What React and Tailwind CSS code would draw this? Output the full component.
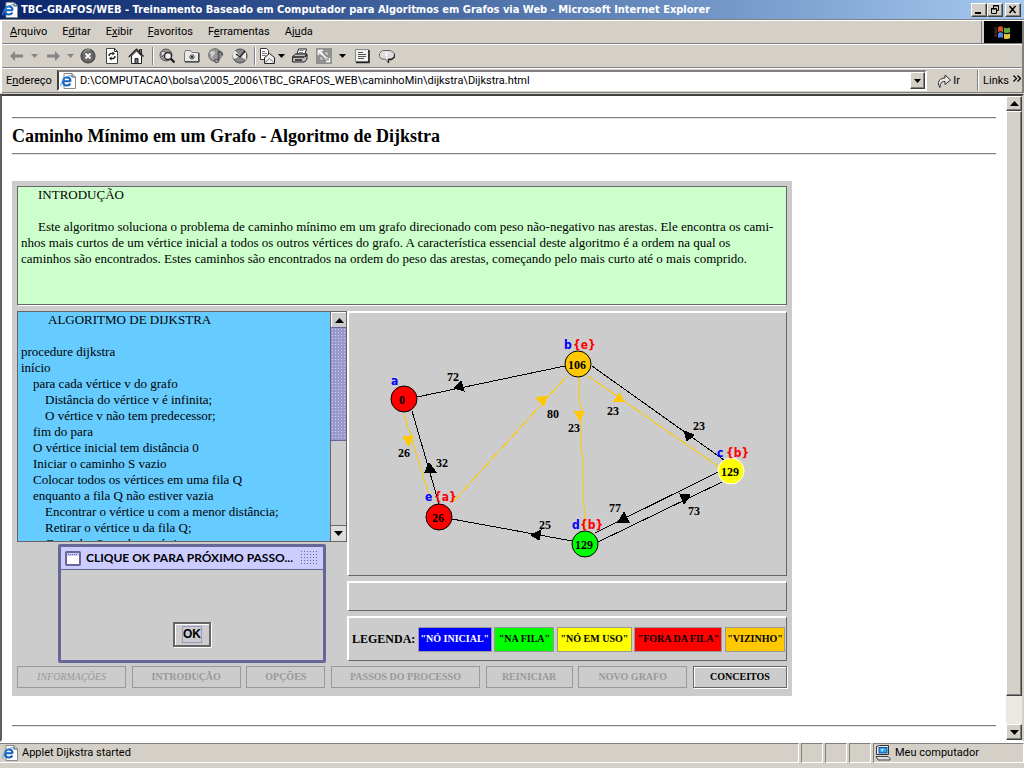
import React from "react";

const raised =
  "border border-t-white border-l-white border-r-[#404040] border-b-[#404040] bg-[#d4d0c8] shadow-[inset_-1px_-1px_0_#808080]";
const sunken = "border border-t-[#808080] border-l-[#808080] border-r-white border-b-white";

const menus = [
  ["", "A", "rquivo"],
  ["E", "d", "itar"],
  ["E", "x", "ibir"],
  ["", "F", "avoritos"],
  ["F", "e", "rramentas"],
  ["Aj", "u", "da"],
];

const algorithm = [
  ["pl-[27px]", "ALGORITMO DE DIJKSTRA"],
  ["", ""],
  ["", "procedure dijkstra"],
  ["", "início"],
  ["pl-3", "para cada vértice v do grafo"],
  ["pl-6", "Distância do vértice v é infinita;"],
  ["pl-6", "O vértice v não tem predecessor;"],
  ["pl-3", "fim do para"],
  ["pl-3", "O vértice inicial tem distância 0"],
  ["pl-3", "Iniciar o caminho S vazio"],
  ["pl-3", "Colocar todos os vértices em uma fila Q"],
  ["pl-3", "enquanto a fila Q não estiver vazia"],
  ["pl-6", "Encontrar o vértice u com a menor distância;"],
  ["pl-6", "Retirar o vértice u da fila Q;"],
  ["pl-6", "Caminho S recebe o vértice u;"],
];

const legend = [
  ['"NÓ INICIAL"', "w-[74px] bg-[#0000ff] text-white"],
  ['"NA FILA"', "w-[60px] bg-[#00ff00] text-black"],
  ['"NÓ EM USO"', "w-[75px] bg-[#ffff00] text-black"],
  ['"FORA DA FILA"', "w-[88px] bg-[#ff0000] text-black"],
  ['"VIZINHO"', "w-[60px] bg-[#ffc800] text-black"],
];

const actions = [
  ["INFORMAÇÕES", "w-[109px] italic font-normal"],
  ["INTRODUÇÃO", "w-[109px] font-bold"],
  ["OPÇÕES", "w-[79px] font-bold"],
  ["PASSOS DO PROCESSO", "w-[149px] font-bold"],
  ["REINICIAR", "w-[87px] font-bold"],
  ["NOVO GRAFO", "w-[109px] font-bold"],
];

const GOLD = "#ffc800";

const edges = [
  { line: [565, 366, 417, 397], head: "454,388 461,381 464,391", color: "#000", weight: 72, at: [447, 381] },
  { line: [404, 414, 430, 498], head: "403,437 413,436 409,446", color: GOLD, weight: 26, at: [398, 457] },
  { line: [439, 504, 412, 411], head: "429,463 425,472 436,472", color: "#000", weight: 32, at: [436, 467] },
  { line: [452, 503, 567, 376], head: "536,398 547,396 544,406", color: GOLD, weight: 80, at: [547, 418] },
  { line: [579, 377, 585, 531], head: "574,411 584,411 580,421", color: GOLD, weight: 23, at: [568, 432] },
  { line: [572, 541, 452, 519], head: "531,535 541,530 539,540", color: "#000", weight: 25, at: [539, 529] },
  { line: [588, 376, 719, 467], head: "614,401 620,393 623,401", color: GOLD, weight: 23, at: [607, 415] },
  { line: [724, 460, 592, 366], head: "684,431 694,435 687,441", color: "#000", weight: 23, at: [693, 430] },
  { line: [718, 472, 595, 533], head: "618,522 624,512 629,522", color: "#000", weight: 77, at: [609, 512] },
  { line: [598, 542, 722, 482], head: "680,494 690,495 684,504", color: "#000", weight: 73, at: [688, 515] },
];

const nodes = [
  { name: "a", cx: 404, cy: 399, fill: "#ff0000", value: 0, vx: 399, name_at: [391, 385] },
  { name: "b", cx: 578, cy: 364, fill: GOLD, value: 106, vx: 568, name_at: [564, 349], prev: "{e}", px: 573 },
  { name: "c", cx: 731, cy: 471, fill: "#ffff00", stroke: "#fff", value: 129, vx: 721, name_at: [717, 457], prev: "{b}", px: 726 },
  { name: "d", cx: 585, cy: 544, fill: "#00ff00", value: 129, vx: 575, name_at: [572, 529], prev: "{b}", px: 580 },
  { name: "e", cx: 439, cy: 517, fill: "#ff0000", value: 26, vx: 432, name_at: [425, 501], prev: "{a}", px: 434 },
];

const IeIcon = () => (
  <svg className="size-4 shrink-0" viewBox="0 0 16 16">
    <path d="M4 .5h8l3.500 3.500v11.500H4z" fill="#fff" stroke="#8a8a8a" />
    <path d="M12 .5V4h3.500" fill="#ddd" stroke="#555" />
    <path d="M10.500 8.200H3.200M10.600 8.500C10.600 5.800 9 4.400 6.900 4.400S3 6 3 8.500s1.600 4 3.900 4c1.700 0 2.900-.8 3.500-2" fill="none" stroke="#1560bd" strokeWidth="2" />
    <path d="M1 13.500C-.5 11 4 5 8 3.300c3-1.200 4-.6 3.600 1" fill="none" stroke="#4aa0e8" />
  </svg>
);

const Caret = ({ className = "text-black" }) => (
  <svg className={`w-[7px] h-1 shrink-0 ${className}`} viewBox="0 0 7 4">
    <path d="M0 0h7L3.500 4z" fill="currentColor" />
  </svg>
);

const Arrow = ({ up }) => (
  <svg className="w-[9px] h-[5px]" viewBox="0 0 9 5">
    <path d={up ? "M0 5h9L4.500 0z" : "M0 0h9L4.500 5z"} fill="#000" />
  </svg>
);

const ToolButton = ({ label, disabled, children, className = "w-6" }) => (
  <button type="button" aria-label={label} disabled={disabled} className={`flex h-full items-center justify-center gap-[3px] ${className}`}>
    {children}
  </button>
);

const Svg = ({ children }) => (
  <svg className="size-4 shrink-0" viewBox="0 0 16 16" fill="none" stroke="#222">
    {children}
  </svg>
);

const Divider = () => <span className="h-[18px] w-[2px] border-l border-l-[#808080] bg-white" />;

const TitleBar = () => (
  <header className="flex h-[19px] items-center bg-linear-to-r from-[#0a246a] to-[#a6caf0] pl-[2px] pr-[3px]">
    <IeIcon />
    <h1 className="flex-1 truncate pl-[3px] font-['DejaVu_Sans_Condensed',sans-serif] text-[11px] leading-[14px] font-bold text-white">
      TBC-GRAFOS/WEB - Treinamento Baseado em Computador para Algoritmos em Grafos via Web - Microsoft Internet Explorer
    </h1>
    <button type="button" aria-label="Minimizar" className={`h-[14px] w-4 ${raised}`}>
      <svg viewBox="0 0 14 12"><path d="M3 8h6v2H3z" /></svg>
    </button>
    <button type="button" aria-label="Restaurar" className={`h-[14px] w-4 ${raised}`}>
      <svg viewBox="0 0 14 12" fill="none" stroke="#000">
        <path d="M5.500 4V1.500h5v5H9M5 2h6M3.500 4.500h5v5h-5zM3 5h6" />
      </svg>
    </button>
    <button type="button" aria-label="Fechar" className={`ml-[2px] h-[14px] w-4 ${raised}`}>
      <svg viewBox="0 0 14 12"><path d="M3.500 2l6 7M9.500 2l-6 7" stroke="#000" strokeWidth="1.600" /></svg>
    </button>
  </header>
);

const MenuBar = () => (
  <div className="flex h-[23px] items-stretch border-b border-b-[#808080]">
    <nav className="flex flex-1 items-center gap-[15px] border-r border-r-[#808080] pl-2">
      {menus.map(([before, key, after]) => (
        <button type="button" key={before + key + after}>
          {before}
          <u>{key}</u>
          {after}
        </button>
      ))}
    </nav>
    <div className="ml-[2px] flex w-[38px] items-center justify-center bg-black">
      <svg className="h-4 w-[18px]" viewBox="0 0 18 16">
        <path d="M4 3c2-1 3-1 5 0v5C7 7 6 7 4 8z" fill="#d9542b" />
        <path d="M10 3.400c2 1 4 1 6-.2v5c-2 1-4 1-6 .2z" fill="#5fae3a" />
        <path d="M4 9c2-1 3-1 5 0v5c-2-1-3-1-5 0z" fill="#4f84d8" />
        <path d="M10 9.400c2 1 4 1 6-.2v5c-2 1-4 1-6 .2z" fill="#e5c13a" />
        <path d="M0 4h3M1 6h2M0 8h3M1 10h2M0 12h3" stroke="#7a3a4a" />
      </svg>
    </div>
  </div>
);

const ToolBar = () => (
  <div className="flex h-6 items-center border-t border-t-white border-b border-b-[#808080] pl-[2px]">
    <ToolButton label="Voltar" disabled>
      <svg className="h-[10px] w-[13px]" viewBox="0 0 13 10"><path d="M0 5l5-5v3.500h8v3H5V10z" fill="#868686" /></svg>
    </ToolButton>
    <Caret className="mx-[3px] text-[#868686]" />
    <ToolButton label="Avançar" disabled>
      <svg className="h-[10px] w-[13px]" viewBox="0 0 13 10"><path d="M13 5L8 0v3.500H0v3h8V10z" fill="#868686" /></svg>
    </ToolButton>
    <Caret className="mx-[2px] text-[#868686]" />
    <ToolButton label="Parar">
      <Svg>
        <circle cx="8" cy="8" r="7" fill="#666" stroke="#333" />
        <path d="M3.500 5A6 6 0 0 1 10 2" stroke="#bbb" />
        <path d="M5.500 5.500l5 5M10.500 5.500l-5 5" stroke="#fff" strokeWidth="2" />
      </Svg>
    </ToolButton>
    <ToolButton label="Atualizar">
      <Svg>
        <path d="M2.500 .5h8l3 3v12h-11z" fill="#fff" stroke="#444" />
        <path d="M10.500 .5v3h3" />
        <path d="M5 8c0-2 1.500-3 4-2.500M11 8c0 2-1.500 3-4 2.500" strokeWidth="1.400" />
        <path d="M8.500 3.500l2.500 2-2.500 2zM7.500 8.500L5 10.500l2.500 2z" fill="#222" stroke="none" />
      </Svg>
    </ToolButton>
    <ToolButton label="Página inicial">
      <Svg>
        <path d="M11.500 1.500h2v5h-2z" fill="#888" />
        <path d="M3.500 8v7.500h10V8L8.500 3z" fill="#fff" />
        <path d="M.8 9L8.500 1.300 15.500 8.500" strokeWidth="1.400" />
        <path d="M7 10.500h3v5H7z" fill="#777" />
      </Svg>
    </ToolButton>
    <span className="w-1" />
    <Divider />
    <ToolButton label="Pesquisar" className="w-[26px]">
      <Svg>
        <circle cx="7" cy="7" r="6" fill="#999" stroke="#555" />
        <path d="M3 4c2-2 4 0 3 2s-3 1-3 3" stroke="#555" fill="#ddd" />
        <circle cx="9" cy="8" r="3.500" fill="#eee" stroke="#222" strokeWidth="1.300" />
        <path d="M11.500 10.500l4 4" strokeWidth="2.400" />
      </Svg>
    </ToolButton>
    <ToolButton label="Favoritos">
      <Svg>
        <path d="M.5 4.500v9h14v-9H8l-1.500-2h-5z" fill="#e8e8e8" stroke="#777" />
        <path d="M15 5v9H1" />
        <path d="M8 6v6M5 9h6M6 7l4 4M10 7l-4 4" strokeWidth=".8" />
      </Svg>
    </ToolButton>
    <ToolButton label="Mídia">
      <Svg>
        <circle cx="7" cy="7" r="6.300" fill="#999" stroke="#666" />
        <path d="M2 5c3-3 5-1 4 1s-3 1-2 4" stroke="#ddd" fill="#ccc" />
        <path d="M10.500 13V3.500c2 0 4 1 4 4" stroke="#555" strokeWidth="1.600" />
        <ellipse cx="8.500" cy="13" rx="2" ry="1.600" fill="#aaa" stroke="#444" />
      </Svg>
    </ToolButton>
    <ToolButton label="Histórico">
      <Svg>
        <circle cx="8" cy="8" r="7" fill="#888" stroke="#444" />
        <path d="M8 8L3 2.500A7 7 0 0 0 2 11zM8 8l6-4v8z" fill="#eee" stroke="none" />
        <path d="M8 9l5-6M8 9L4 6" strokeWidth="1.400" />
      </Svg>
    </ToolButton>
    <span className="w-[2px]" />
    <Divider />
    <ToolButton label="Correio" className="w-8">
      <Svg>
        <path d="M1.500 .5h6l2 2v9h-8z" fill="#fff" stroke="#333" />
        <path d="M3 3.500h3M3 5.500h5M3 7.500h4" stroke="#777" />
        <path d="M5.500 9.500l5-4 5 4v6h-10z" fill="#eee" />
        <path d="M5.500 15l5-4.500 5 4.500" stroke="#777" />
      </Svg>
      <Caret />
    </ToolButton>
    <ToolButton label="Imprimir">
      <Svg>
        <path d="M5 6l1.500-5h8L13 6z" fill="#fff" />
        <path d="M7.500 2.500h4M7 4.500h4" stroke="#888" />
        <path d="M.5 8.500l3-2.500H15v5l-2.500 3H.5z" fill="#bbb" />
        <path d="M1 9h11M12.500 9L15 6.500M3 12h7" strokeWidth="1.400" />
      </Svg>
    </ToolButton>
    <ToolButton label="Tela inteira" disabled>
      <Svg>
        <rect width="16" height="16" fill="#909090" stroke="none" />
        <path d="M5 7V5h2M9 5h2v2M11 9v2H9M7 11H5V9" stroke="#ddd" strokeWidth="1.200" />
        <path d="M2.500 7V2.500H7M3 3l7 7" stroke="#fff" strokeWidth="1.600" />
        <path d="M13.500 10v3.500H10" stroke="#fff" strokeWidth="1.400" />
      </Svg>
    </ToolButton>
    <Caret className="mx-[3px] text-black" />
    <ToolButton label="Editar" className="w-[26px]">
      <Svg>
        <path d="M1.500 1.500h13v12h-13z" fill="#f0f0f0" stroke="#888" />
        <path d="M15 2v12.500H2" strokeWidth="1.600" />
        <path d="M4 4.500h5M4 6.500h8M4 8.500h8M4 10.500h6" stroke="#555" />
      </Svg>
    </ToolButton>
    <ToolButton label="Discutir">
      <Svg>
        <path d="M3.500 2.500h8l4 3v3l-3 2.500H9.500v4l-3-4h-4l-2-2.500v-3z" fill="#ddd" stroke="#666" />
        <path d="M15.500 6v3l-3 2.500H9.500V15" strokeWidth="1.300" />
        <path d="M7.500 4v4M7.500 9v1.500" stroke="#fff" strokeWidth="1.600" />
      </Svg>
    </ToolButton>
  </div>
);

const AddressBar = () => (
  <form className="flex h-[25px] items-center border-t border-t-white border-b border-b-[#808080] pl-1" onSubmit={(e) => e.preventDefault()}>
    <label htmlFor="address" className="w-[51px]">
      E<u>n</u>dereço
    </label>
    <div className="flex h-[21px] flex-1 items-center border-2 border-t-[#808080] border-l-[#404040] border-r-white border-b-white bg-white pl-px">
      <IeIcon />
      <input
        id="address"
        className="min-w-0 flex-1 pl-1 text-black outline-none"
        defaultValue="D:\COMPUTACAO\bolsa\2005_2006\TBC_GRAFOS_WEB\caminhoMin\dijkstra\Dijkstra.html"
      />
      <button type="button" aria-label="Abrir lista" className={`flex h-[17px] w-[15px] items-center justify-center ${raised}`}>
        <Caret />
      </button>
    </div>
    <button type="submit" className="ml-[10px] flex items-center gap-[2px]">
      <svg className="h-[14px] w-[14px]" viewBox="0 0 14 14">
        <path d="M3 13.500C-.5 9 2 4 8 4V1l5.500 5L8 10.500V7.500C4.500 7 3 9.500 3 13.500z" fill="#e8e8e8" stroke="#333" />
      </svg>
      Ir
    </button>
    <span className="ml-[17px] h-[21px] w-[2px] border-l border-l-[#808080] bg-white" />
    <button type="button" className="ml-1 flex items-start gap-1 pr-px">
      Links
      <svg className="mt-px h-[7px] w-2" viewBox="0 0 8 7" fill="none" stroke="#000" strokeWidth="1.300">
        <path d="M.5 .5l3 3-3 3M4.500 .5l3 3-3 3" />
      </svg>
    </button>
  </form>
);

const Rule = () => <hr className="h-[2px] border-0 border-t border-t-[#808080] bg-[#e4e4e4]" />;

const Graph = () => (
  <svg className="block w-full" viewBox="349 313 437 262" role="img" aria-label="Grafo">
    {edges.map((e) => (
      <g key={e.head}>
        <line x1={e.line[0]} y1={e.line[1]} x2={e.line[2]} y2={e.line[3]} stroke={e.color} shapeRendering="crispEdges" />
        <polygon points={e.head} fill={e.color} stroke={e.color} shapeRendering="crispEdges" />
        <text x={e.at[0]} y={e.at[1]} className="font-['Liberation_Serif',serif] text-[12px] font-bold">
          {e.weight}
        </text>
      </g>
    ))}
    {nodes.map((n) => (
      <g key={n.name}>
        <circle cx={n.cx} cy={n.cy} r="13" fill={n.fill} stroke={n.stroke || "#000"} />
        <text x={n.vx} y={n.cy + 5} className="font-['Liberation_Serif',serif] text-[12px] font-bold">
          {n.value}
        </text>
        <text x={n.name_at[0]} y={n.name_at[1]} fill="#0000ff" className="font-['DejaVu_Sans_Condensed',sans-serif] text-[12px] font-bold">
          {n.name}
        </text>
        {n.prev && (
          <text x={n.px} y={n.name_at[1]} fill="#ff0000" className="font-['DejaVu_Sans_Condensed',sans-serif] text-[12px] font-bold">
            {n.prev}
          </text>
        )}
      </g>
    ))}
  </svg>
);

const panel = "border border-t-2 border-l-2 border-t-white border-l-white border-r-[#666666] border-b-[#666666]";

const StepDialog = () => (
  <section role="dialog" aria-label="Próximo passo" className="-mb-0.5 mt-0.5 ml-[41px] flex h-[119px] w-[268px] flex-col rounded-[2px] border-[3px] border-[#666699] bg-[#cccccc]">
    <div className="flex h-[23px] items-center gap-[5px] border-b border-b-[#666699] bg-[#ccccff] pr-[5px] pl-1">
      <svg className="h-[15px] w-4 shrink-0" viewBox="0 0 16 15">
        <rect x="1" y="1" width="14" height="13" rx="1" fill="#fff" stroke="#666699" strokeWidth="2" />
        <path d="M2 2h12v3H2z" fill="#ccccff" />
        <path d="M3 3.500h10" stroke="#666699" strokeDasharray="1 1" />
      </svg>
      <h3 className="flex-1 whitespace-nowrap font-[Lato,sans-serif] text-[12px] leading-4 font-bold">CLIQUE OK PARA PRÓXIMO PASSO...</h3>
      <span className="h-4 w-[18px] bg-[radial-gradient(#666699_30%,transparent_31%)] bg-size-[3px_3px]" />
    </div>
    <div className="flex flex-1 items-end justify-center pb-[13px]">
      <button type="button" className="flex h-[25px] w-[38px] items-center justify-center border-2 border-[#666666] bg-[#cccccc] shadow-[1px_1px_0_#fff,inset_1px_1px_0_#fff]">
        <span className="border border-[#9999cc] font-['Liberation_Sans',sans-serif] text-[12px] leading-[15px] font-bold">OK</span>
      </button>
    </div>
  </section>
);

const AlgorithmPane = () => (
  <div className="flex h-[231px] border border-[#666666] bg-[#66ccff]">
    <div className="flex-1 overflow-hidden pl-[3px] leading-4">
      {algorithm.map(([indent, text], i) => (
        <p key={i} className={`h-4 whitespace-nowrap ${indent}`}>
          {text}
        </p>
      ))}
    </div>
    <div className="flex w-4 flex-col border-l border-l-[#666666] bg-[#cccccc]">
      <button type="button" aria-label="Subir" className="flex h-[15px] items-center justify-center border-t border-l border-white">
        <Arrow up />
      </button>
      <div className="h-[114px] border border-r-0 border-l-0 border-[#666699] bg-[#9999cc] bg-[radial-gradient(#ccccff_30%,transparent_31%)] bg-size-[3px_3px]" />
      <div className="flex-1" />
      <button type="button" aria-label="Descer" className="flex h-4 items-center justify-center border-t border-t-[#666666] bg-[#dddddd]">
        <Arrow />
      </button>
    </div>
  </div>
);

const Applet = () => (
  <section className="mt-[26px] flex w-[780px] flex-col gap-[5px] bg-[#cccccc] px-[5px] pt-[5px] pb-2 font-['Liberation_Serif',serif] text-[13px] text-black">
    <div className="h-[120px] border border-[#666666] border-b-white bg-[#ccffcc] pl-[3px] leading-4 whitespace-nowrap shadow-[inset_0_-1px_0_#666666]">
      <p className="pl-[17px]">INTRODUÇÃO</p>
      <p className="mt-4 pl-[17px]">
        Este algoritmo soluciona o problema de caminho mínimo em um grafo direcionado com peso não-negativo nas arestas. Ele encontra os cami-
      </p>
      <p>nhos mais curtos de um vértice inicial a todos os outros vértices do grafo. A característica essencial deste algoritmo é a ordem na qual os</p>
      <p>caminhos são encontrados. Estes caminhos são encontrados na ordem do peso das arestas, começando pelo mais curto até o mais comprido.</p>
    </div>
    <div className="grid grid-cols-[330px_1fr]">
      <div>
        <AlgorithmPane />
        <StepDialog />
      </div>
      <div className="flex flex-col gap-[5px]">
        <div className={panel}>
          <Graph />
        </div>
        <div className={`h-[30px] ${panel}`} />
        <div className={`flex h-[45px] items-center justify-between pl-[3px] pr-px ${panel}`}>
          <span className="text-[12px] font-bold">LEGENDA:</span>
          {legend.map(([text, style]) => (
            <span key={text} className={`flex h-[25px] items-center justify-center border border-[#999999] text-[10px] font-bold whitespace-nowrap ${style}`}>
              {text}
            </span>
          ))}
        </div>
      </div>
    </div>
    <div className="flex justify-between text-[10px]">
      {actions.map(([text, style]) => (
        <button key={text} type="button" disabled className={`h-[22px] border border-[#999999] whitespace-nowrap text-[#999999] ${style}`}>
          {text}
        </button>
      ))}
      <button type="button" className="h-[22px] w-[94px] border border-[#666666] font-bold shadow-[1px_1px_0_#fff,inset_1px_1px_0_#fff]">
        CONCEITOS
      </button>
    </div>
  </section>
);

const PageScrollbar = () => (
  <div className="flex w-4 shrink-0 flex-col bg-[#eae8e3]">
    <button type="button" aria-label="Rolar para cima" className={`flex h-[15px] items-center justify-center ${raised}`}>
      <Arrow up />
    </button>
    <div className={`mb-[28px] flex-1 ${raised}`} />
    <button type="button" aria-label="Rolar para baixo" className={`flex h-4 items-center justify-center ${raised}`}>
      <Arrow />
    </button>
  </div>
);

const StatusBar = () => (
  <footer className="flex h-[26px] items-stretch gap-[2px] border-t border-t-white pb-[5px]">
    <div className={`flex flex-1 items-center gap-1 pl-[2px] ${sunken} border-l-0`}>
      <IeIcon />
      Applet Dijkstra started
    </div>
    <div className={`w-[22px] ${sunken}`} />
    <div className={`w-[22px] ${sunken}`} />
    <div className={`w-[22px] ${sunken}`} />
    <div className={`flex w-[151px] items-center gap-1 pl-px ${sunken}`}>
      <svg className="size-4" viewBox="0 0 16 16">
        <path d="M1.500 1.500l3-1h9v9h-12z" fill="#eee" stroke="#333" />
        <rect x="4" y="2.500" width="8" height="5.500" fill="#2aa5ee" stroke="#1a4fa0" />
        <path d="M6 4h3l-2 3z" fill="#bfe8ff" />
        <path d="M1 11.500h12l2 2v1.500H3z" fill="#ddd" stroke="#444" />
      </svg>
      Meu computador
    </div>
  </footer>
);

export default function App() {
  return (
    <div className="flex min-h-screen flex-col overflow-x-hidden bg-[#d4d0c8] font-[Roboto,sans-serif] text-[11px] leading-[14px] text-black">
      <TitleBar />
      <div className="border-t border-t-[#808080] bg-white pt-px">
        <div className="ml-[2px] border-r-2 border-r-[#808080] bg-[#d4d0c8]">
          <MenuBar />
          <ToolBar />
          <AddressBar />
        </div>
      </div>
      <main className="mt-px flex flex-1 border-2 border-t-[#404040] border-l-[#606060] border-r-[#d4d0c8] border-b-white bg-white">
        <div className="min-w-0 flex-1 px-[10px] pt-[21px]">
          <Rule />
          <h2 className="py-[5px] font-['Liberation_Serif',serif] text-[18px] leading-6 font-bold">Caminho Mínimo em um Grafo - Algoritmo de Dijkstra</h2>
          <Rule />
          <Applet />
          <div className="mt-[29px]">
            <Rule />
          </div>
        </div>
        <PageScrollbar />
      </main>
      <StatusBar />
    </div>
  );
}
